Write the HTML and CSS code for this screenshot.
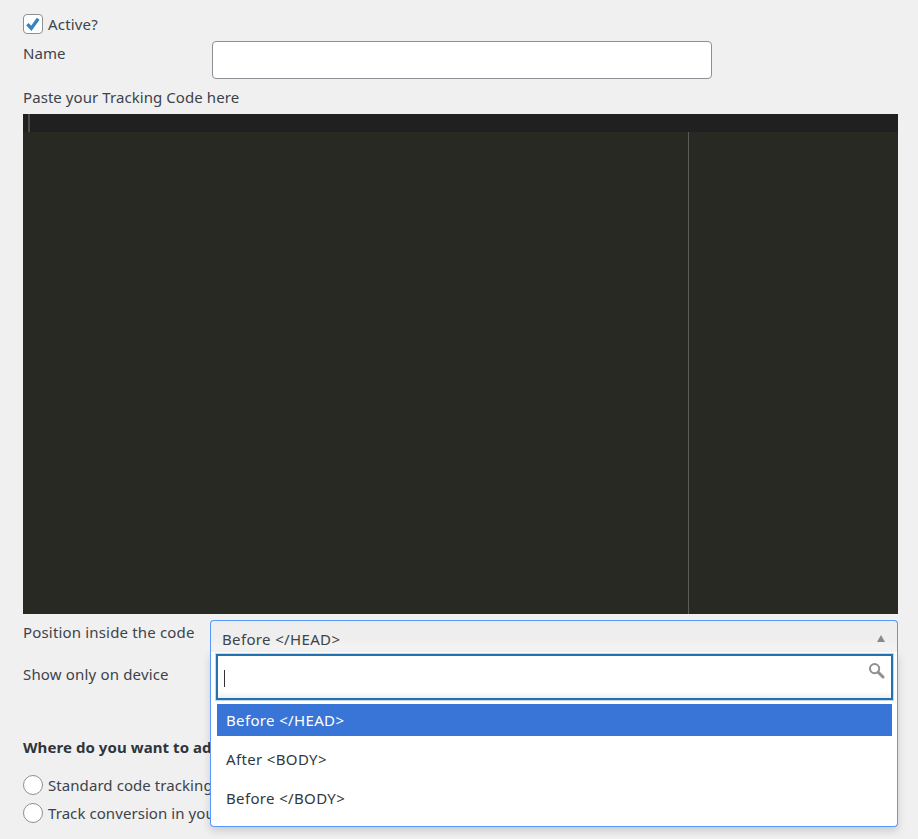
FILE: index.html
```html
<!DOCTYPE html>
<html lang="en">
<head>
<meta charset="utf-8">
<title>Tracking Code</title>
<link rel="stylesheet" href="styles.css">
</head>
<body>
<form class="form">
  <label class="check-row">
    <span class="checkbox">
      <svg width="20" height="20" viewBox="0 0 20 20"><path d="M4.4 10.2 L8.3 14.4 L15.2 4.8" fill="none" stroke="#3582c4" stroke-width="3.4"/></svg>
    </span>
    <span class="wide-text">Active?</span>
  </label>
  <div class="name-row">
    <label class="name-label">Name</label>
    <div class="text-input"></div>
  </div>
  <div class="code-label">Paste your Tracking Code here</div>
  <div class="editor">
    <div class="editor-top"><span class="editor-caret"></span></div>
    <div class="editor-body"><span class="print-margin"></span></div>
  </div>
  <div class="position-row">
    <label class="position-label wide-text">Position inside the code</label>
    <div class="select">
      <div class="select-head">
        <span class="option-text">Before &lt;/HEAD&gt;</span>
        <span class="arrow"></span>
      </div>
      <div class="select-drop">
        <div class="search">
          <span class="search-caret"></span>
          <svg class="search-icon" width="17" height="17" viewBox="0 0 17 17"><circle cx="6.6" cy="6.6" r="4.6" fill="none" stroke="#8f8f8f" stroke-width="2"/><path d="M10.2 10.2 L15 15" stroke="#8f8f8f" stroke-width="3" stroke-linecap="round"/></svg>
        </div>
        <ul class="options">
          <li class="option option-active">Before &lt;/HEAD&gt;</li>
          <li class="option">After &lt;BODY&gt;</li>
          <li class="option">Before &lt;/BODY&gt;</li>
        </ul>
      </div>
    </div>
  </div>
  <div class="device-label wide-text">Show only on device</div>
  <div class="where">Where do you want to add this code?</div>
  <label class="radio-row"><span class="radio"></span><span>Standard code tracking</span></label>
  <label class="radio-row"><span class="radio"></span><span>Track conversion in your store</span></label>
</form>
</body>
</html>
```
FILE: styles.css
```css
* { box-sizing: border-box; }
html, body { margin: 0; height: 100%; }
body {
  background: #f0f0f1;
  color: #3c434a;
  font-family: "Noto Sans", "Open Sans", sans-serif;
  font-size: 15px;
  letter-spacing: .07px;
  line-height: 20px;
  overflow: hidden;
}
.wide-text { letter-spacing: .17px; }
.option-text { letter-spacing: .35px; }
.form { padding: 14px 20px 0 23px; display: flex; flex-direction: column; }
.check-row { display: flex; align-items: center; gap: 5px; height: 20px; }
.checkbox {
  width: 20px; height: 20px; background: #fff;
  border: 1px solid #8c8f94; border-radius: 4px; display: block; position: relative;
}
.checkbox svg { position: absolute; left: -1px; top: -1px; }
.name-row { display: flex; margin-top: 7px; height: 38px; }
.name-label { width: 189px; padding-top: 2px; }
.text-input { width: 500px; height: 38px; background: #fff; border: 1px solid #8c8f94; border-radius: 4px; }
.code-label { margin-top: 8px; height: 20px; }
.editor { margin-top: 7px; height: 500px; display: flex; flex-direction: column; }
.editor-top { height: 18px; background: #202020; padding-left: 5px; flex: none; }
.editor-caret { display: block; width: 2px; height: 18px; background: #4a4a48; }
.editor-body { flex: 1; background: #292923; position: relative; }
.print-margin { position: absolute; left: 665px; top: 0; bottom: 0; width: 1px; background: #5b5b57; }
.position-row { display: flex; margin-top: 6px; height: 44px; }
.position-label { width: 187px; padding-top: 2px; }
.select { position: relative; width: 688px; }
.select-head {
  height: 34px; padding: 8px 10px 0 11px; display: flex; justify-content: space-between;
  background: linear-gradient(#eeeeee 0%, #eeeeee 50%, #f6f6f6 100%);
  border: 1px solid #5897fb; border-bottom: 0; border-radius: 4px 4px 0 0;
}
.arrow {
  width: 0; height: 0; margin: 6px 2px 0 0;
  border-left: 4px solid transparent; border-right: 4px solid transparent; border-bottom: 7px solid #8a8a8a;
}
.select-drop {
  position: absolute; left: 0; right: 0; top: 32px; height: 175px;
  padding: 2px 5px 0 6px; background: #fff;
  border: 1px solid #5897fb; border-top: 0; border-radius: 0 0 4px 4px;
  box-shadow: 0 4px 8px rgba(0, 0, 0, .15);
}
.search {
  height: 46px; margin: 0 -1px; position: relative;
  border: 2px solid #2271b1; outline: 1px solid #c5d9e8;
  background: linear-gradient(#fff 0%, #fff 85%, #eeeeee 100%);
}
.search-caret { position: absolute; left: 6px; top: 14px; width: 1px; height: 17px; background: #333; }
.search-icon { position: absolute; right: 6px; top: 6px; }
.options { list-style: none; margin: 4px 0 0 0; padding: 0; letter-spacing: .35px; }
.option { height: 32px; padding: 6px 9px; margin-bottom: 7px; color: #32373c; }
.option-active { background: #3875d7; color: #fff; }
.device-label { height: 20px; }
.where { margin-top: 53px; height: 20px; font-weight: 700; color: #2f353a; }
.radio-row { display: flex; align-items: center; gap: 5px; height: 20px; margin-bottom: 8px; }
.where + .radio-row { margin-top: 18px; }
.radio { width: 20px; height: 20px; border: 1px solid #8c8f94; border-radius: 50%; background: #fff; flex: none; }
```
